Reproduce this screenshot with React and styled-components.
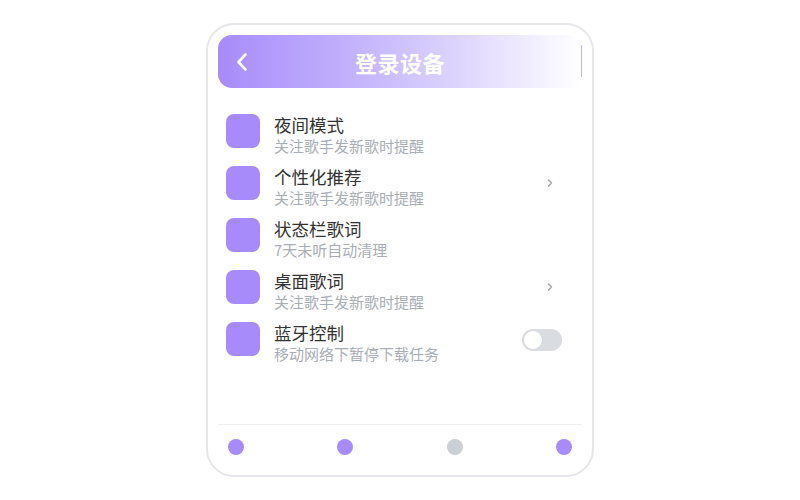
import React from 'react'
import styled, { createGlobalStyle } from 'styled-components'

const Global = createGlobalStyle`
  html, body {
    margin: 0;
    padding: 0;
    background: #ffffff;
    font-family: "Noto Sans CJK SC", "Noto Sans", sans-serif;
  }
`

const items = [
  { title: '夜间模式', sub: '关注歌手发新歌时提醒', right: null },
  { title: '个性化推荐', sub: '关注歌手发新歌时提醒', right: 'arrow' },
  { title: '状态栏歌词', sub: '7天未听自动清理', right: null },
  { title: '桌面歌词', sub: '关注歌手发新歌时提醒', right: 'arrow' },
  { title: '蓝牙控制', sub: '移动网络下暂停下载任务', right: 'toggle' },
]

const dots = [true, true, false, true]

function App() {
  return (
    <Page>
      <Global />
      <Phone>
        <Header>
          <BackButton>
            <svg width="14" height="20" viewBox="0 0 14 20">
              <path d="M10.5 2.5 L3.5 10 L10.5 17.5" fill="none" stroke="#fff" strokeWidth="2.6" strokeLinecap="round" strokeLinejoin="round" />
            </svg>
          </BackButton>
          <Title>登录设备</Title>
        </Header>

        <List>
          {items.map((it) => (
            <Row key={it.title}>
              <IconBox />
              <TextCol>
                <RowTitle>{it.title}</RowTitle>
                <RowSub>{it.sub}</RowSub>
              </TextCol>
              {it.right === 'arrow' && (
                <Arrow>
                  <svg width="6" height="8" viewBox="0 0 6 8">
                    <path d="M1.5 1 L4.5 4 L1.5 7" fill="none" stroke="#9ca3af" strokeWidth="1.4" strokeLinecap="round" strokeLinejoin="round" />
                  </svg>
                </Arrow>
              )}
              {it.right === 'toggle' && (
                <Toggle>
                  <Knob />
                </Toggle>
              )}
            </Row>
          ))}
        </List>

        <Footer>
          {dots.map((on, i) => (
            <Dot key={i} active={on} />
          ))}
        </Footer>
      </Phone>
    </Page>
  )
}

export default App

const Page = styled.div`
  width: 800px;
  height: 500px;
  display: flex;
  align-items: center;
  justify-content: center;
`

const Phone = styled.div`
  box-sizing: border-box;
  width: 388px;
  height: 454px;
  border: 2px solid #e6e6eb;
  border-radius: 28px;
  padding: 10px 10px 6px 10px;
  display: flex;
  flex-direction: column;
  background: #fff;
`

const Header = styled.div`
  position: relative;
  flex-shrink: 0;
  height: 53px;
  border-radius: 14px;
  background: linear-gradient(to right, #a78bfa 0%, #c9bbfc 45%, #ffffff 100%);
  display: flex;
  align-items: center;
  justify-content: center;

  &::after {
    content: '';
    position: absolute;
    right: 0;
    top: 10px;
    height: 32px;
    width: 1px;
    background: #c4b5fd;
  }
`

const BackButton = styled.div`
  position: absolute;
  left: 17px;
  top: 17px;
  display: flex;
`

const Title = styled.div`
  color: #fff;
  font-size: 22px;
  font-weight: 700;
  letter-spacing: 0.5px;
`

const List = styled.div`
  flex: 1;
  padding: 26px 20px 0 8px;
  display: flex;
  flex-direction: column;
`

const Row = styled.div`
  height: 52px;
  display: flex;
  align-items: flex-start;
`

const IconBox = styled.div`
  width: 34px;
  height: 34px;
  border-radius: 8px;
  background: #a78bfa;
  flex-shrink: 0;
`

const TextCol = styled.div`
  flex: 1;
  margin: -1px 0 0 14px;
  display: flex;
  flex-direction: column;
`

const RowTitle = styled.div`
  font-size: 17.5px;
  line-height: 24px;
  color: #333;
`

const RowSub = styled.div`
  font-size: 15px;
  line-height: 17px;
  color: #a9aeb6;
`

const Arrow = styled.div`
  width: 24px;
  height: 34px;
  display: flex;
  align-items: center;
  justify-content: center;
`

const Toggle = styled.div`
  box-sizing: border-box;
  width: 40px;
  height: 22px;
  border-radius: 11px;
  background: #d9dce1;
  padding: 2px;
  margin-top: 7px;
  display: flex;
  align-items: center;
`

const Knob = styled.div`
  width: 18px;
  height: 18px;
  border-radius: 50%;
  background: #fff;
`

const Footer = styled.div`
  height: 44px;
  flex-shrink: 0;
  border-top: 1px solid #eeeef2;
  padding: 0 10px;
  display: flex;
  align-items: center;
  justify-content: space-between;
`

const Dot = styled.div`
  width: 16px;
  height: 16px;
  border-radius: 50%;
  background: ${(p) => (p.active ? '#a78bfa' : '#cbd0d6')};
`
